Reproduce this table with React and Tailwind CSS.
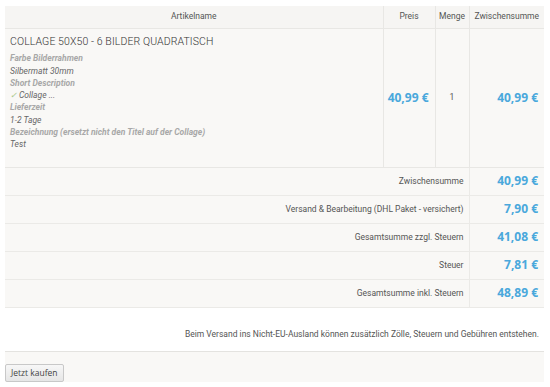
import React from 'react';

const totals = [
  { label: 'Zwischensumme', value: '40,99 €' },
  { label: 'Versand & Bearbeitung (DHL Paket - versichert)', value: '7,90 €' },
  { label: 'Gesamtsumme zzgl. Steuern', value: '41,08 €' },
  { label: 'Steuer', value: '7,81 €' },
  { label: 'Gesamtsumme inkl. Steuern', value: '48,89 €' },
];

const meta = [
  { key: 'Farbe Bilderrahmen', value: 'Silbermatt 30mm' },
  { key: 'Short Description', value: 'Collage ...', check: true },
  { key: 'Lieferzeit', value: '1-2 Tage' },
  { key: 'Bezeichnung (ersetzt nicht den Titel auf der Collage)', value: 'Test' },
];

const price = "font-['Open_Sans'] font-bold text-[12px] text-[#4aa8dc]";

const App = () => {
  return (
    <div className="w-[550px] h-[387px] bg-white font-['Roboto',sans-serif] text-[#555] pt-[6px] px-[5px] overflow-hidden">
      {/* Cart table */}
      <table className="w-[539px] border-collapse bg-[#f9f8f6] text-[8.5px] table-fixed">
        <colgroup>
          <col className="w-[378px]" />
          <col className="w-[52px]" />
          <col className="w-[34px]" />
          <col className="w-[75px]" />
        </colgroup>
        <thead>
          <tr className="h-[22px] bg-[#f6f5f3] border-b border-[#e8e7e4]">
            <th className="font-normal text-center">Artikelname</th>
            <th className="font-normal text-center border-l border-[#e8e7e4]">Preis</th>
            <th className="font-normal text-center border-l border-[#e8e7e4]">Menge</th>
            <th className="font-normal text-center border-l border-[#e8e7e4]">Zwischensumme</th>
          </tr>
        </thead>
        <tbody>
          <tr className="h-[139px] border-b border-[#e8e7e4]">
            <td className="align-top pl-[5px] pt-[5px]">
              <div className="text-[10.5px] font-light text-[#333] tracking-[0.1px] mb-[3px]">
                COLLAGE 50X50 - 6 BILDER QUADRATISCH
              </div>
              {meta.map((m) => (
                <div key={m.key} className="italic leading-[12.3px]">
                  <div className="font-bold text-[#a8a8a8]">{m.key}</div>
                  <div className="text-[#666]">
                    {m.check && <span className="text-[#a8c98a] mr-[2px]">✓</span>}
                    {m.value}
                  </div>
                </div>
              ))}
            </td>
            <td className={`text-right pr-[6px] border-l border-[#e8e7e4] ${price}`}>40,99 €</td>
            <td className="text-center border-l border-[#e8e7e4] text-[8.5px]">1</td>
            <td className={`text-right pr-[6px] border-l border-[#e8e7e4] ${price}`}>40,99 €</td>
          </tr>
          {totals.map((t) => (
            <tr key={t.label} className="h-[28px] border-b border-[#ebeae7]">
              <td colSpan={3} className="text-right pr-[5px]">{t.label}</td>
              <td className={`text-right pr-[6px] border-l border-[#ebeae7] ${price}`}>{t.value}</td>
            </tr>
          ))}
        </tbody>
      </table>

      <p className="text-right text-[8.5px] text-[#555] mt-[20px] pr-[6px]">
        Beim Versand ins Nicht-EU-Ausland können zusätzlich Zölle, Steuern und Gebühren entstehen.
      </p>

      {/* Checkout bar */}
      <div className="mt-[11px] border-t border-[#e4e3e0] bg-[#f9f8f6] w-[539px] h-[31px] flex items-end">
        <button className="h-[18px] px-[5px] text-[8.5px] text-[#444] bg-gradient-to-b from-[#f7f7f7] to-[#e6e6e6] border border-[#c8c8c8] rounded-[2px] font-['Open_Sans']">
          Jetzt kaufen
        </button>
      </div>
    </div>
  );
};

export default App;
